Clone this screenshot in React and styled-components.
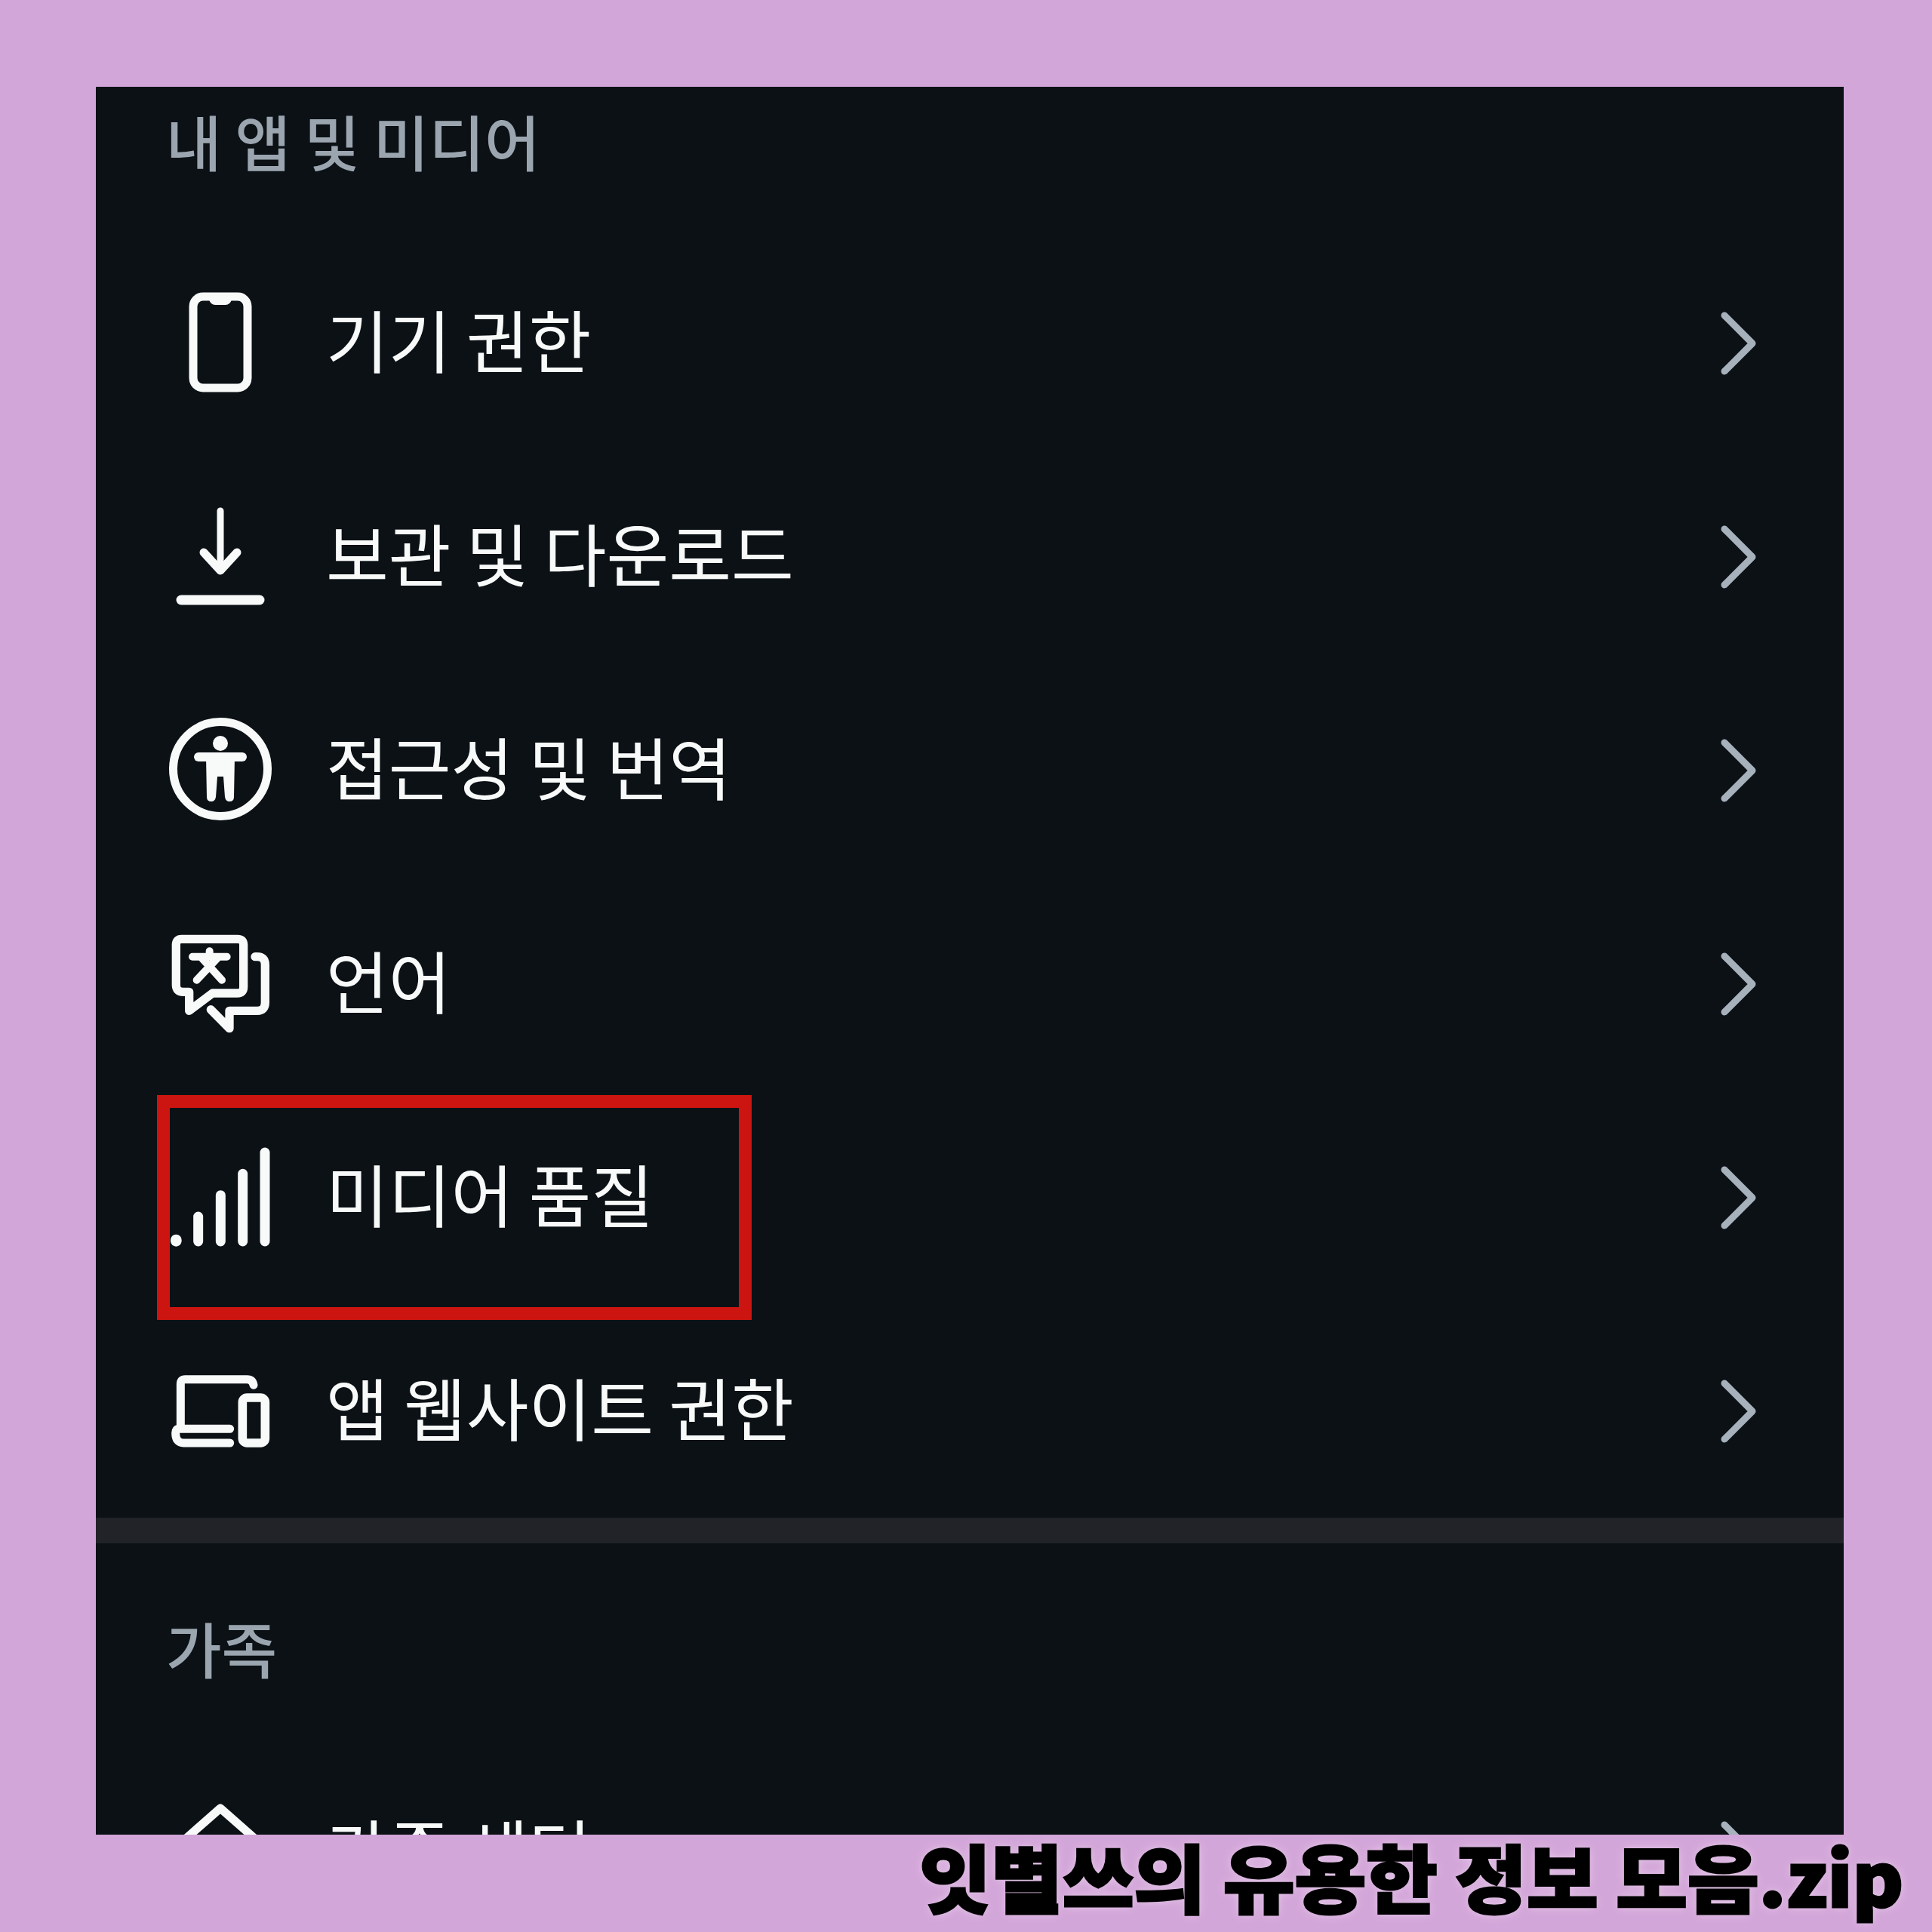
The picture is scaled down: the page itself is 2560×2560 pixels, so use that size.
import styled, { createGlobalStyle } from "styled-components";

const GlobalStyle = createGlobalStyle`
  html, body {
    margin: 0;
    padding: 0;
    background: #d3a6d9;
  }
`;

const Page = styled.div`
  width: 2560px;
  height: 2560px;
  padding-top: 115px;
  box-sizing: border-box;
  display: flex;
  flex-direction: column;
  background: #d3a6d9;
  font-family: "Noto Sans CJK KR", "Noto Sans", sans-serif;
  overflow: hidden;
`;

const Panel = styled.main`
  width: 2316px;
  height: 2316px;
  margin-left: 127px;
  flex: none;
  background: #0b1115;
  overflow: hidden;
`;

const SectionTitle = styled.h2`
  margin: 0;
  height: ${(p) => p.$height}px;
  padding: ${(p) => p.$top}px 0 0 93px;
  box-sizing: border-box;
  font-size: 80px;
  font-weight: 500;
  line-height: 80px;
  color: #9ba5b0;
`;

const Row = styled.div`
  position: relative;
  height: 283px;
  display: flex;
  align-items: center;
  padding: 0 115px 0 97px;
`;

const IconSlot = styled.div`
  width: 136px;
  height: 140px;
  margin-right: 72px;
  flex: none;
  display: flex;
  align-items: center;
  justify-content: center;
  color: #f8f9f9;

  svg {
    display: block;
    overflow: visible;
  }
`;

const Label = styled.span`
  flex: 1;
  margin-top: -10px;
  font-size: 90px;
  line-height: 100px;
  font-weight: 400;
  color: #f8f9f9;
`;

const Highlight = styled.div`
  position: absolute;
  left: 81px;
  top: 8px;
  width: 788px;
  height: 298px;
  box-sizing: border-box;
  border: 17px solid #cc1510;
  z-index: 2;
`;

const Divider = styled.div`
  height: 34px;
  margin-top: 2px;
  background: #222328;
`;

const Caption = styled.footer`
  display: flex;
  justify-content: flex-end;
  padding: 0 36px 0 0;
  font-size: 98px;
  line-height: 106px;
  font-weight: 900;
  color: #000;
  white-space: nowrap;
  text-shadow: 0 0 12px rgba(255, 255, 255, 0.45);
  -webkit-text-stroke: 3px #000;
  transform: scaleX(1.05);
  transform-origin: right center;
`;

const Svg = ({ box, width = 136, height = 140, children }) => (
  <svg width={width} height={height} viewBox={box} fill="none" stroke="currentColor" strokeLinecap="round" strokeLinejoin="round">
    {children}
  </svg>
);

const PhoneIcon = () => (
  <Svg box="0 0 136 140">
    <rect x="32" y="10" width="72" height="121" rx="13" strokeWidth="11" />
    <path d="M54 14 q2 6 7 6 h14 q5 0 7 -6 z" fill="currentColor" strokeWidth="2" />
  </Svg>
);

const DownloadIcon = () => (
  <Svg box="0 0 136 140">
    <path d="M68 11 V86" strokeWidth="9" />
    <path d="M46 66 L68 90 L90 66" strokeWidth="11" />
    <path d="M16 129 H120" strokeWidth="13" />
  </Svg>
);

const AccessIcon = () => (
  <Svg box="0 0 136 140">
    <circle cx="68" cy="70" r="62.5" strokeWidth="11" />
    <circle cx="68" cy="36" r="10" fill="currentColor" stroke="none" />
    <path d="M39 54 H97" strokeWidth="12" />
    <path
      d="M49 54 H87 L86 107 Q86 113 80 113 Q75 113 74 107 L72 80 H64 L62 107 Q61 113 56 113 Q50 113 50 107 Z"
      fill="currentColor"
      stroke="none"
    />
  </Svg>
);

const LanguageIcon = () => (
  <Svg box="72 903 408 420">
    <g strokeWidth="34">
      <path d="M122 940 H345 Q368 940 368 963 V1130 Q368 1155 343 1155 H245 L152 1225 V1150 H128 Q100 1150 100 1122 V962 Q100 940 122 940 Z" />
      <path d="M414 1010 H422 Q454 1010 454 1042 V1192 Q454 1225 422 1225 H312 V1295 L238 1220" />
    </g>
    <g strokeWidth="30">
      <path d="M233 988 V1008 M165 1010 H302 M202 1015 L282 1103 M265 1015 L182 1103" />
    </g>
  </Svg>
);

const SignalIcon = () => (
  <Svg box="72 42 408 420">
    <g strokeWidth="39">
      <path d="M100 426 V430" strokeWidth="44" />
      <path d="M188 333 V432" />
      <path d="M277 248 V432" />
      <path d="M365 163 V432" />
      <path d="M453 78 V432" />
    </g>
  </Svg>
);

const DevicesIcon = () => (
  <Svg box="72 888 408 420">
    <g strokeWidth="33">
      <path d="M118 1160 V995 Q118 977 136 977 H382 Q404 977 408 1000" />
      <path d="M314 1174 H112 Q98 1174 98 1190 Q98 1230 130 1230 H314" />
      <rect x="364" y="1050" width="90" height="180" rx="18" strokeWidth="35" />
    </g>
  </Svg>
);

const HomeIcon = () => (
  <Svg box="0 0 136 140">
    <path d="M10 64 L68 13 L126 64 M24 56 V130 H112 V56" strokeWidth="11" />
  </Svg>
);

const Chevron = styled.svg.attrs({ viewBox: "0 0 50 90" })`
  width: 50px;
  height: 90px;
  flex: none;
  margin-top: 4px;
  fill: none;
  stroke: #a6b1bc;
  stroke-width: 9;
  stroke-linecap: round;
  stroke-linejoin: round;
`;

const SettingRow = ({ icon, label, highlighted }) => (
  <Row>
    <IconSlot>{icon}</IconSlot>
    <Label>{label}</Label>
    <Chevron>
      <path d="M7 8 L44 45 L7 82" />
    </Chevron>
    {highlighted && <Highlight />}
  </Row>
);

export default function App() {
  return (
    <>
      <GlobalStyle />
      <Page>
        <Panel>
          <SectionTitle $height={196} $top={30}>내 앱 및 미디어</SectionTitle>
          <SettingRow icon={<PhoneIcon />} label="기기 권한" />
          <SettingRow icon={<DownloadIcon />} label="보관 및 다운로드" />
          <SettingRow icon={<AccessIcon />} label="접근성 및 번역" />
          <SettingRow icon={<LanguageIcon />} label="언어" />
          <SettingRow icon={<SignalIcon />} label="미디어 품질" highlighted />
          <SettingRow icon={<DevicesIcon />} label="앱 웹사이트 권한" />
          <Divider />
          <SectionTitle $height={266} $top={97}>가족</SectionTitle>
          <SettingRow icon={<HomeIcon />} label="가족 센터" />
        </Panel>
        <Caption>잇별쓰의 유용한 정보 모음.zip</Caption>
      </Page>
    </>
  );
}
